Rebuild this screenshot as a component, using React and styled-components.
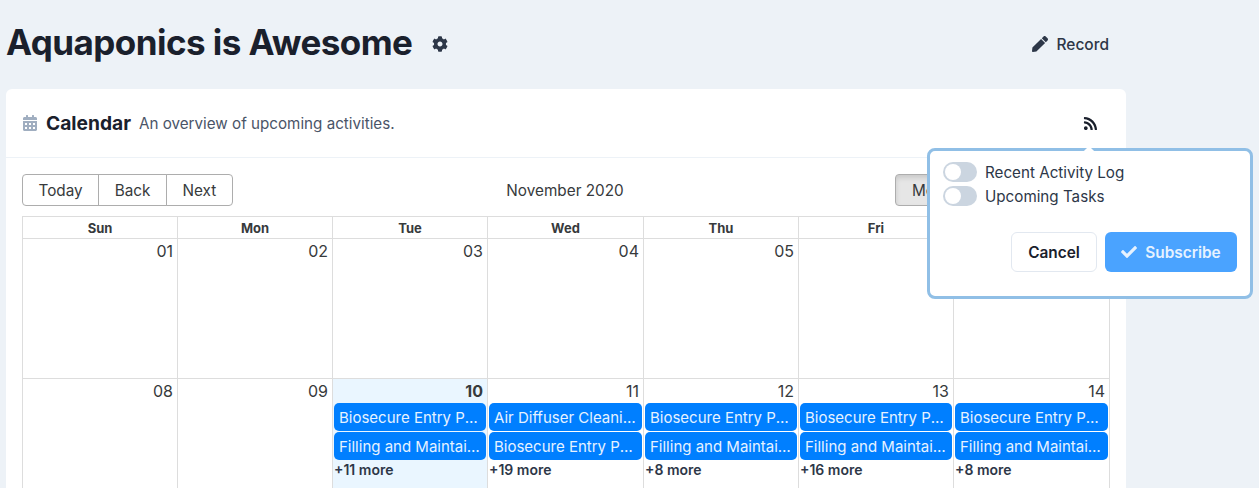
import React from "react";
import styled, { createGlobalStyle } from "styled-components";
import { FaCog, FaPen, FaRss, FaCheck, FaCalendarAlt } from "react-icons/fa";

const COLS = "154px 155px 155px 156px 155px 155px 1fr";

const Global = createGlobalStyle`
  html, body { margin: 0; height: 488px; overflow: hidden; background: #edf2f7; }
  body { font-family: Inter, "Liberation Sans", sans-serif; color: #1a202c; }
`;
const Page = styled.div`
  position: relative;
  width: 1120px;
  margin-left: 6px;
`;
const Top = styled.header`
  height: 89px;
  display: flex;
  align-items: flex-start;
  justify-content: space-between;
`;
const TitleRow = styled.div`
  display: flex;
  align-items: center;
  gap: 20px;
  height: 84px;
`;
const Title = styled.h1`
  margin: 0;
  font-size: 35px;
  letter-spacing: -0.55px;
  line-height: 42px;
  font-weight: 700;
  color: #1a202c;
`;
const Gear = styled(FaCog)`
  width: 16px;
  height: 16px;
  color: #2d3748;
  margin-top: 4px;
`;
const RecordBtn = styled.div`
  display: flex;
  align-items: center;
  gap: 8px;
  margin: 34px 17px 0 0;
  height: 20px;
  font-size: 15.5px;
  font-weight: 500;
  color: #2d3748;
`;
const Card = styled.section`
  background: #fff;
  border-radius: 6px 6px 0 0;
  height: 399px;
  overflow: hidden;
`;
const CardHead = styled.div`
  height: 69px;
  box-sizing: border-box;
  border-bottom: 1px solid #edf2f7;
  padding: 0 28px 0 17px;
  display: flex;
  align-items: center;
`;
const CalIcon = styled(FaCalendarAlt)`
  width: 14px;
  height: 16px;
  color: #a0aec0;
  margin-right: 9px;
`;
const CardTitle = styled.span`
  font-size: 19.2px;
  font-weight: 700;
  color: #1a202c;
  margin-right: 8px;
`;
const CardSub = styled.span`
  font-size: 15.2px;
  color: #4a5568;
  flex: 1;
`;
const Rss = styled(FaRss)`
  width: 15px;
  height: 15px;
  color: #1a202c;
`;
const CardBody = styled.div`
  padding: 16px 16px 0;
`;
const Toolbar = styled.div`
  display: grid;
  grid-template-columns: 1fr auto 1fr;
  align-items: center;
  height: 32px;
  margin-bottom: 10px;
`;
const BtnGroup = styled.div`
  display: inline-flex;
  justify-self: ${(p) => (p.$end ? "end" : "start")};
  margin-right: ${(p) => (p.$end ? "3px" : "0")};
`;
const CalBtn = styled.button`
  font: inherit;
  font-size: 15.3px;
  height: 32px;
  padding: 0 15.5px;
  box-sizing: border-box;
  color: #373a3c;
  background: ${(p) => (p.$active ? "#e6e6e6" : "#fff")};
  box-shadow: ${(p) => (p.$active ? "inset 0 3px 5px rgba(0,0,0,.125)" : "none")};
  border: 1px solid #adadad;
  margin-left: -1px;
  &:first-child { margin-left: 0; border-radius: 4px 0 0 4px; }
  &:last-child { border-radius: 0 4px 4px 0; }
`;
const Label = styled.span`
  color: #373a3c;
  font-size: 15.3px;
  margin-right: 2px;
`;
const Grid = styled.div`
  border: 1px solid #ddd;
  border-bottom: 0;
`;
const HeadRow = styled.div`
  display: grid;
  grid-template-columns: ${COLS};
  height: 21px;
  border-bottom: 1px solid #ddd;
`;
const HeadCell = styled.div`
  font-size: 13px;
  font-weight: 700;
  line-height: 22px;
  text-align: center;
  color: #373a3c;
  border-left: 1px solid #ddd;
  &:first-child { border-left: 0; }
`;
const Week = styled.div`
  display: grid;
  grid-template-columns: ${COLS};
  height: ${(p) => p.$h}px;
  border-bottom: ${(p) => (p.$last ? "0" : "1px solid #ddd")};
`;
const Day = styled.div`
  min-width: 0;
  position: relative;
  border-left: 1px solid #ddd;
  background: ${(p) => (p.$today ? "#eaf6ff" : "transparent")};
  padding: 0 1px;
  &:first-child { border-left: 0; }
`;
const DayNum = styled.div`
  text-align: right;
  font-size: 16px;
  line-height: 24px;
  padding-right: 3px;
  color: #373a3c;
  font-weight: ${(p) => (p.$today ? 700 : 400)};
`;
const Event = styled.div`
  background: #007fff;
  color: #e6f2ff;
  height: 28px;
  line-height: 29px;
  box-sizing: border-box;
  border-radius: 5px;
  font-size: 15px;
  padding: 0 4px 0 5px;
  margin: 0 0 1px;
  white-space: nowrap;
  overflow: hidden;
  text-overflow: ellipsis;
`;
const More = styled.div`
  font-size: 14px;
  font-weight: 600;
  color: #2d3748;
  line-height: 18px;
`;
const Popover = styled.div`
  position: absolute;
  left: 921px;
  top: 148px;
  width: 326px;
  height: 151px;
  box-sizing: border-box;
  background: #fff;
  border: 3px solid #90bfe6;
  border-radius: 8px;
  padding: 9px 12px 9px 13px;
  &::before {
    content: "";
    position: absolute;
    top: -3px;
    left: 154px;
    width: 10px;
    height: 10px;
    background: #fff;
    transform: rotate(45deg);
  }
`;
const SwitchRow = styled.div`
  display: flex;
  align-items: center;
  gap: 8px;
  height: 24px;
  font-size: 15.2px;
  color: #2d3748;
`;
const Switch = styled.span`
  width: 34px;
  height: 20px;
  border-radius: 10px;
  background: #cbd5e0;
  position: relative;
  flex: none;
  &::after {
    content: "";
    position: absolute;
    left: 2px;
    top: 2px;
    width: 16px;
    height: 16px;
    border-radius: 50%;
    background: #fff;
  }
`;
const Actions = styled.div`
  display: flex;
  justify-content: flex-end;
  gap: 8px;
  margin-top: 24px;
  padding-right: 1px;
`;
const Cancel = styled.button`
  font: inherit;
  font-size: 15.4px;
  font-weight: 600;
  height: 40px;
  width: 86px;
  background: #fff;
  color: #1a202c;
  border: 1px solid #e2e8f0;
  border-radius: 6px;
`;
const Subscribe = styled.button`
  font: inherit;
  font-size: 15.4px;
  font-weight: 600;
  height: 40px;
  width: 132px;
  background: #4aa3ff;
  color: #e6f2ff;
  border: 0;
  border-radius: 6px;
  display: flex;
  align-items: center;
  justify-content: center;
  gap: 8px;
`;

const E = { B: "Biosecure Entry Procedures", F: "Filling and Maintaining Tanks", A: "Air Diffuser Cleaning Task" };
const days = ["Sun", "Mon", "Tue", "Wed", "Thu", "Fri", "Sat"];
const w2 = [
  { n: "08" }, { n: "09" },
  { n: "10", today: true, ev: [E.B, E.F], more: 11 },
  { n: "11", ev: [E.A, E.B], more: 19 },
  { n: "12", ev: [E.B, E.F], more: 8 },
  { n: "13", ev: [E.B, E.F], more: 16 },
  { n: "14", ev: [E.B, E.F], more: 8 },
];

export default function App() {
  return (
    <Page>
      <Global />
      <Top>
        <TitleRow>
          <Title>Aquaponics is Awesome</Title>
          <Gear />
        </TitleRow>
        <RecordBtn><FaPen size={16} />Record</RecordBtn>
      </Top>
      <Card>
        <CardHead>
          <CalIcon />
          <CardTitle>Calendar</CardTitle>
          <CardSub>An overview of upcoming activities.</CardSub>
          <Rss />
        </CardHead>
        <CardBody>
          <Toolbar>
            <BtnGroup>
              <CalBtn>Today</CalBtn>
              <CalBtn>Back</CalBtn>
              <CalBtn>Next</CalBtn>
            </BtnGroup>
            <Label>November 2020</Label>
            <BtnGroup $end>
              <CalBtn $active>Month</CalBtn>
              <CalBtn>Week</CalBtn>
              <CalBtn>Day</CalBtn>
            </BtnGroup>
          </Toolbar>
          <Grid>
            <HeadRow>{days.map((d) => <HeadCell key={d}>{d}</HeadCell>)}</HeadRow>
            <Week $h={139}>
              {["01", "02", "03", "04", "05", "06", "07"].map((n) => (
                <Day key={n}><DayNum>{n}</DayNum></Day>
              ))}
            </Week>
            <Week $h={120} $last>
              {w2.map((d) => (
                <Day key={d.n} $today={d.today}>
                  <DayNum $today={d.today}>{d.n}</DayNum>
                  {d.ev && d.ev.map((t) => <Event key={t}>{t}</Event>)}
                  {d.more && <More>+{d.more} more</More>}
                </Day>
              ))}
            </Week>
          </Grid>
        </CardBody>
      </Card>
      <Popover>
        <SwitchRow><Switch />Recent Activity Log</SwitchRow>
        <SwitchRow><Switch />Upcoming Tasks</SwitchRow>
        <Actions>
          <Cancel>Cancel</Cancel>
          <Subscribe><FaCheck size={16} />Subscribe</Subscribe>
        </Actions>
      </Popover>
    </Page>
  );
}
